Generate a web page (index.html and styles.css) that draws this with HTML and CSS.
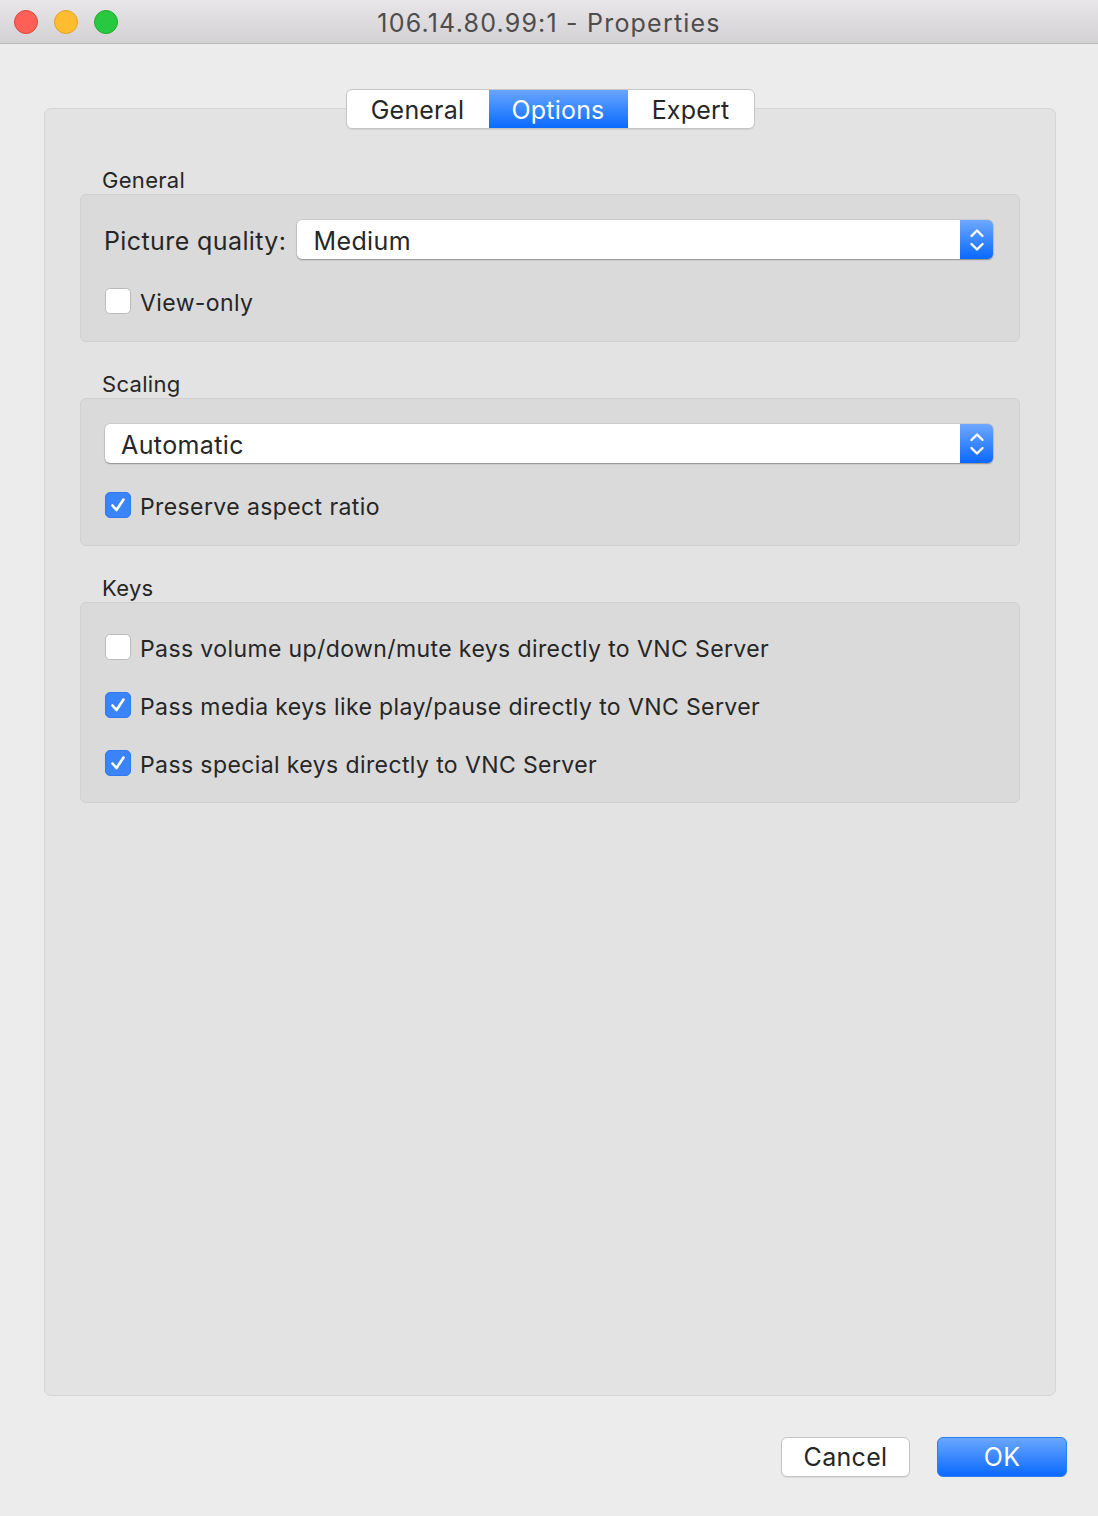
FILE: index.html
```html
<!DOCTYPE html>
<html>
<head>
<meta charset="utf-8">
<link rel="stylesheet" href="styles.css">
</head>
<body>
<div class="window">
  <div class="titlebar">
    <div class="lights">
      <span class="light red"></span>
      <span class="light yellow"></span>
      <span class="light green"></span>
    </div>
    <div class="title">106.14.80.99:1 - Properties</div>
    <div></div>
  </div>
  <div class="main">
    <div class="tabbox">
      <div class="segmented">
        <div class="seg">General</div>
        <div class="seg active">Options</div>
        <div class="seg">Expert</div>
      </div>

      <div class="section-label first">General</div>
      <div class="group">
        <div class="row popup-row">
          <span class="field-label">Picture quality:</span>
          <div class="popup">
            <span class="popup-text">Medium</span>
            <span class="stepper"><svg width="16" height="26" viewBox="0 0 16 26"><path d="M2.5 9 L8 3.5 L13.5 9 M2.5 17 L8 22.5 L13.5 17" fill="none" stroke="#fff" stroke-width="2.4" stroke-linecap="round" stroke-linejoin="round"/></svg></span>
          </div>
        </div>
        <label class="check-row"><span class="box"></span><span class="check-text">View-only</span></label>
      </div>

      <div class="section-label">Scaling</div>
      <div class="group">
        <div class="row popup-row">
          <div class="popup full">
            <span class="popup-text">Automatic</span>
            <span class="stepper"><svg width="16" height="26" viewBox="0 0 16 26"><path d="M2.5 9 L8 3.5 L13.5 9 M2.5 17 L8 22.5 L13.5 17" fill="none" stroke="#fff" stroke-width="2.4" stroke-linecap="round" stroke-linejoin="round"/></svg></span>
          </div>
        </div>
        <label class="check-row"><span class="box checked"><svg width="18" height="18" viewBox="0 0 18 18"><path d="M3.5 9.5 L7.5 14 L14.5 3.5" fill="none" stroke="#fff" stroke-width="2.6" stroke-linecap="round" stroke-linejoin="round"/></svg></span><span class="check-text">Preserve aspect ratio</span></label>
      </div>

      <div class="section-label">Keys</div>
      <div class="group keys">
        <label class="check-row"><span class="box"></span><span class="check-text">Pass volume up/down/mute keys directly to VNC Server</span></label>
        <label class="check-row"><span class="box checked"><svg width="18" height="18" viewBox="0 0 18 18"><path d="M3.5 9.5 L7.5 14 L14.5 3.5" fill="none" stroke="#fff" stroke-width="2.6" stroke-linecap="round" stroke-linejoin="round"/></svg></span><span class="check-text">Pass media keys like play/pause directly to VNC Server</span></label>
        <label class="check-row"><span class="box checked"><svg width="18" height="18" viewBox="0 0 18 18"><path d="M3.5 9.5 L7.5 14 L14.5 3.5" fill="none" stroke="#fff" stroke-width="2.6" stroke-linecap="round" stroke-linejoin="round"/></svg></span><span class="check-text">Pass special keys directly to VNC Server</span></label>
      </div>
    </div>

    <div class="buttons">
      <button class="btn cancel">Cancel</button>
      <button class="btn ok">OK</button>
    </div>
  </div>
</div>
</body>
</html>
```

FILE: styles.css
```css
* { box-sizing: border-box; }
html, body { margin: 0; padding: 0; }
body {
  width: 1098px;
  height: 1516px;
  background: #ececec;
  font-family: "Inter", "Liberation Sans", sans-serif;
  color: #262626;
  overflow: hidden;
}
.window { width: 1098px; height: 1516px; display: flex; flex-direction: column; }

.titlebar {
  height: 44px;
  display: grid;
  grid-template-columns: 1fr auto 1fr;
  align-items: center;
  background: linear-gradient(#e8e6e8, #d3d1d3);
  border-bottom: 1px solid #b9b9b9;
}
.lights { display: flex; gap: 16px; padding-left: 14px; }
.light { width: 24px; height: 24px; border-radius: 50%; display: block; }
.red { background: #fe5f57; border: 1px solid #e2463f; }
.yellow { background: #febc2e; border: 1px solid #e1a325; }
.green { background: #28c840; border: 1px solid #1dad2b; }
.title { font-size: 25px; color: #4d4d4d; letter-spacing: 1.2px; padding-top: 2px; }

.main { padding: 64px 31px 0 44px; display: flex; flex-direction: column; }
.tabbox {
  width: 1012px;
  height: 1288px;
  background: #e3e3e3;
  border: 1px solid #d6d6d6;
  border-radius: 7px;
  padding: 0 35px;
  display: flex;
  flex-direction: column;
}
.segmented {
  align-self: center;
  margin-top: -20px;
  display: flex;
  height: 40px;
  background: #fff;
  border: 1px solid #c6c6c6;
  border-radius: 6px;
  box-shadow: 0 1px 1px rgba(0,0,0,0.08);
  overflow: hidden;
  font-size: 25px;
  letter-spacing: 0.2px;
}
.seg { display: flex; align-items: center; justify-content: center; color: #262626; padding-top: 1px; }
.seg:nth-child(1) { width: 142px; }
.seg:nth-child(2) { width: 139px; }
.seg:nth-child(3) { width: 126px; }
.seg.active { background: linear-gradient(#68a6ff, #0a6aff); color: #fff; }

.section-label {
  font-size: 22px;
  line-height: 26px;
  padding-left: 22px;
  margin-top: 29px;
  margin-bottom: 1px;
  color: #262626;
  letter-spacing: 0.3px;
}
.section-label.first { margin-top: 38px; }

.group {
  background: #dadada;
  border: 1px solid #d0d0d0;
  border-radius: 6px;
  padding: 25px 26px 27px 23px;
  display: flex;
  flex-direction: column;
  gap: 29px;
}
.group.keys { padding-top: 31px; padding-bottom: 26px; gap: 32px; }

.row { display: flex; align-items: center; height: 39px; }
.field-label { font-size: 25px; margin-right: 11px; white-space: nowrap; letter-spacing: 0.4px; padding-top: 2px; }

.popup {
  flex: 1;
  height: 39px;
  background: #fff;
  border-radius: 5px;
  box-shadow: 0 0 0 0.5px rgba(0,0,0,0.12), 0 1px 1.5px rgba(0,0,0,0.3);
  display: flex;
  align-items: center;
  overflow: hidden;
}
.popup.full { margin-left: 1px; }
.popup-text { flex: 1; font-size: 25px; padding-left: 16px; color: #262626; letter-spacing: 0.4px; padding-top: 2px; }
.stepper {
  width: 33px;
  height: 100%;
  background: linear-gradient(#6ea8ff, #0a68ff);
  display: flex;
  align-items: center;
  justify-content: center;
}

.check-row { display: flex; align-items: center; height: 26px; font-size: 23px; gap: 9px; padding-left: 1px; }
.check-text { letter-spacing: 0.4px; padding-top: 3px; }
.box {
  width: 26px;
  height: 26px;
  border-radius: 5px;
  background: #fff;
  border: 1px solid #bcbcbc;
  display: flex;
  align-items: center;
  justify-content: center;
  flex: none;
}
.box.checked { background: #3a84f7; border-color: #3079ef; }

.buttons { display: flex; justify-content: flex-end; gap: 27px; margin-top: 41px; }
.btn {
  height: 40px;
  border-radius: 6px;
  font-family: inherit;
  font-size: 25px;
  padding: 0;
  letter-spacing: 0.3px;
}
.cancel { width: 129px; background: #fff; border: 1px solid #c4c4c4; color: #262626; box-shadow: 0 1px 1px rgba(0,0,0,0.08); }
.ok { width: 130px; background: linear-gradient(#6aa7ff, #0b69ff); border: 1px solid #2e7cf2; color: #fff; }
```
